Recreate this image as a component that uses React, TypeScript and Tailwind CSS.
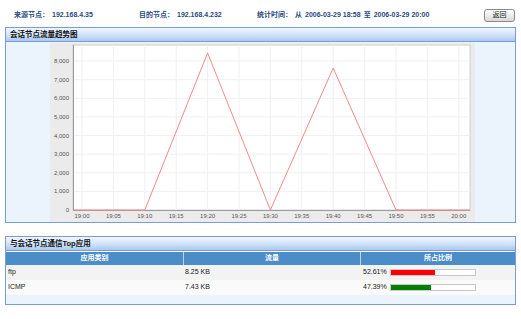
import React from "react";

const xs = Array.from({ length: 13 }, (_, i) => 32 + i * 31.4);
const xl = ["19:00","19:05","19:10","19:15","19:20","19:25","19:30","19:35","19:40","19:45","19:50","19:55","20:00"];
const yv = (v: number) => 166 - (v / 1000) * 18.625;
const yl = ["0","1,000","2,000","3,000","4,000","5,000","6,000","7,000","8,000"];

function Chart() {
  const pts = [
    [23, 166], [xs[2], 166], [xs[4], yv(8430)], [xs[6], 166], [xs[8], yv(7624)], [xs[10], 166], [420, 166],
  ].map((p) => p.join(",")).join(" ");
  return (
    <svg width="425" height="178" viewBox="0 0 425 178" style={{ display: "block" }}>
      <rect x="23" y="1" width="397" height="165" fill="#ffffff" stroke="#d0d0d0" strokeWidth="1" />
      {xs.map((x, i) => (
        <line key={"vx" + i} x1={x} y1={1} x2={x} y2={166} stroke="#f0f0f0" strokeWidth="1" />
      ))}
      {yl.map((_, i) => (
        <line key={"hy" + i} x1={23} y1={yv(i * 1000)} x2={420} y2={yv(i * 1000)} stroke="#f0f0f0" strokeWidth="1" />
      ))}
      <line x1="23.5" y1="1" x2="23.5" y2="166.5" stroke="#9a9a9a" strokeWidth="1" />
      <line x1="23" y1="166.5" x2="420" y2="166.5" stroke="#9a9a9a" strokeWidth="1" />
      {yl.map((t, i) => (
        <text key={"yt" + i} x="19" y={yv(i * 1000) + 2} textAnchor="end" fontSize="6" fill="#555" fontFamily="Liberation Sans, Arial, sans-serif">{t}</text>
      ))}
      {xl.map((t, i) => (
        <text key={"xt" + i} x={xs[i]} y="173.5" textAnchor="middle" fontSize="6" fill="#555" fontFamily="Liberation Sans, Arial, sans-serif">{t}</text>
      ))}
      <polyline points={pts} fill="none" stroke="#f08a8a" strokeWidth="1" />
    </svg>
  );
}

function PanelHeader({ title }: { title: string }) {
  return (
    <div className="h-[14px] flex items-center pl-[4px] border-b border-[#7b9ad6] bg-gradient-to-b from-[#f2f7fe] via-[#d3e4fa] to-[#a9c9f1] text-[7.5px] font-bold text-[#111]">
      {title}
    </div>
  );
}

export default function App() {
  return (
    <div className="w-[521px] h-[319px] bg-white overflow-hidden" style={{ fontFamily: '"Liberation Sans", Arial, "Noto Sans CJK SC", sans-serif' }}>
      <div className="h-[26px] pt-[9px]">
        <div className="h-[13px] flex items-center text-[7px] font-bold text-[#2a4a80]">
          <div className="w-[139px] pl-[14px] flex gap-[3px]"><span>来源节点：</span><span>192.168.4.35</span></div>
          <div className="w-[118px] flex gap-[3px]"><span>目的节点：</span><span>192.168.4.232</span></div>
          <div className="flex-1 flex gap-[3px]"><span>统计时间：</span><span>从</span><span>2006-03-29 18:58</span><span>至</span><span>2006-03-29 20:00</span></div>
          <div className="mr-[6px] w-[31px] h-[13px] rounded-[3px] border border-[#8a8a8a] bg-gradient-to-b from-white to-[#d8d8d8] flex items-center justify-center font-normal text-[#222] text-[7px]">返回</div>
        </div>
      </div>
      <div className="mx-[5px] border border-[#7b9ad6] mt-[1px]">
        <PanelHeader title="会话节点流量趋势图" />
        <div className="h-[180px] bg-[#ebf3fd] pl-[44px] pt-[1px]">
          <div className="w-[425px] h-[179px] bg-[#ebebeb] pt-[1px]">
            <Chart />
          </div>
        </div>
      </div>
      <div className="mx-[5px] border border-[#7b9ad6] mt-[13px]">
        <PanelHeader title="与会话节点通信Top应用" />
        <div className="bg-[#ebf3fd]">
          <div className="flex h-[13px] bg-[#4a8dc8] text-white font-bold text-[7px] mt-[1px]">
            <div className="w-[178px] flex items-center justify-center border-r border-[#bcd4ec]">应用类别</div>
            <div className="w-[177px] flex items-center justify-center border-r border-[#bcd4ec]">流量</div>
            <div className="flex-1 flex items-center justify-center">所占比例</div>
          </div>
          <div className="flex h-[15px] bg-[#f3f3f3] text-[7px] text-[#222]">
            <div className="w-[178px] flex items-center pl-[2px]">ftp</div>
            <div className="w-[177px] flex items-center pl-[1px]">8.25 KB</div>
            <div className="flex-1 flex items-center pl-[2px] gap-[3px]">
              <span className="w-[24px]">52.61%</span>
              <div className="w-[86px] h-[7px] border border-[#c8c8c8] bg-white">
                <div className="h-full bg-[#ff0000]" style={{ width: "52.61%" }} />
              </div>
            </div>
          </div>
          <div className="flex h-[15px] bg-[#fafafa] text-[7px] text-[#222]">
            <div className="w-[178px] flex items-center pl-[2px]">ICMP</div>
            <div className="w-[177px] flex items-center pl-[1px]">7.43 KB</div>
            <div className="flex-1 flex items-center pl-[2px] gap-[3px]">
              <span className="w-[24px]">47.39%</span>
              <div className="w-[86px] h-[7px] border border-[#c8c8c8] bg-white">
                <div className="h-full bg-[#008000]" style={{ width: "47.39%" }} />
              </div>
            </div>
          </div>
          <div className="h-[9px]" />
        </div>
      </div>
    </div>
  );
}
